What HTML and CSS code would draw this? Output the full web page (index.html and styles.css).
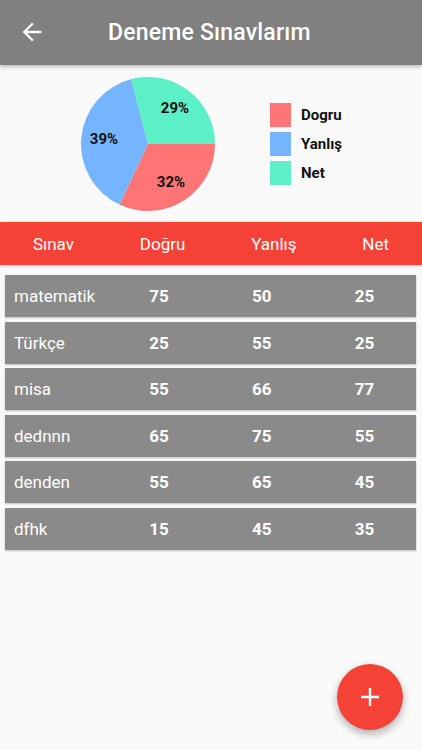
FILE: index.html
```html
<!DOCTYPE html>
<html lang="tr">
<head>
  <meta charset="UTF-8">
  <title>Deneme Sınavlarım</title>
  <link rel="stylesheet" href="styles.css">
</head>
<body>
  <div class="appbar">
    <svg class="back" width="28" height="28" viewBox="0 0 24 24">
      <path d="M20 11H7.83l5.59-5.59L12 4l-8 8 8 8 1.41-1.41L7.83 13H20v-2z" fill="#fff"/>
    </svg>
    <h1>Deneme Sınavlarım</h1>
  </div>

  <div class="chart">
    <svg class="pie" width="134" height="134" viewBox="-67 -67 134 134">
      <!-- Dogru 32%, Yanlis 39%, Net 29% ; 0 derece saat 3 yonunde -->
      <path d="M0 0 L67 0 A67 67 0 0 1 -28.5 60.6 Z" fill="#ff7575"/>
      <path d="M0 0 L-28.5 60.6 A67 67 0 0 1 -16.7 -64.9 Z" fill="#75b4ff"/>
      <path d="M0 0 L-16.7 -64.9 A67 67 0 0 1 67 0 Z" fill="#5cf0c6"/>
      <text x="27" y="-35" class="pct">29%</text>
      <text x="-44" y="-4" class="pct">39%</text>
      <text x="23" y="39" class="pct">32%</text>
    </svg>
    <div class="legend">
      <div class="item"><span class="box red"></span>Dogru</div>
      <div class="item"><span class="box blue"></span>Yanlış</div>
      <div class="item"><span class="box green"></span>Net</div>
    </div>
  </div>

  <div class="tablehead">
    <span>Sınav</span>
    <span>Doğru</span>
    <span>Yanlış</span>
    <span>Net</span>
  </div>

  <div class="list">
    <div class="card"><span class="name">matematik</span><b>75</b><b>50</b><b>25</b></div>
    <div class="card"><span class="name">Türkçe</span><b>25</b><b>55</b><b>25</b></div>
    <div class="card"><span class="name">misa</span><b>55</b><b>66</b><b>77</b></div>
    <div class="card"><span class="name">dednnn</span><b>65</b><b>75</b><b>55</b></div>
    <div class="card"><span class="name">denden</span><b>55</b><b>65</b><b>45</b></div>
    <div class="card"><span class="name">dfhk</span><b>15</b><b>45</b><b>35</b></div>
  </div>

  <div class="fab">
    <svg width="22" height="22" viewBox="0 0 22 22">
      <path d="M11 2v18M2 11h18" stroke="#fff" stroke-width="2.4"/>
    </svg>
  </div>
</body>
</html>
```

FILE: styles.css
```css
* {
  box-sizing: border-box;
}
body {
  margin: 0;
  background: #fafafa;
  font-family: Roboto, "Liberation Sans", sans-serif;
  width: 422px;
  height: 750px;
  position: relative;
  overflow: hidden;
}

.appbar {
  height: 65px;
  background: #808080;
  display: flex;
  align-items: center;
  padding-left: 18px;
  box-shadow: 0 2px 4px rgba(0,0,0,0.25);
}
.appbar .back {
  margin-top: -2px;
}
.appbar h1 {
  margin: 0 0 0 62px;
  color: #fff;
  font-size: 23px;
  font-weight: 500;
  letter-spacing: 0.2px;
}

.chart {
  height: 157px;
  display: flex;
  align-items: center;
  padding-left: 81px;
}
.pie .pct {
  font-size: 15px;
  font-weight: bold;
  fill: #111;
  text-anchor: middle;
  dominant-baseline: middle;
}

.legend {
  margin-left: 55px;
  display: flex;
  flex-direction: column;
  gap: 5px;
  margin-top: 0;
}
.legend .item {
  display: flex;
  align-items: center;
  font-size: 15px;
  font-weight: bold;
  color: #111;
}
.legend .box {
  width: 21px;
  height: 24px;
  margin-right: 10px;
}
.box.red { background: #ff7575; }
.box.blue { background: #75b4ff; }
.box.green { background: #5cf0c6; }

.tablehead {
  height: 43px;
  background: #f44336;
  display: flex;
  justify-content: space-around;
  align-items: center;
  color: #fff;
  font-size: 17px;
  box-shadow: 0 1px 3px rgba(0,0,0,0.2);
}

.list {
  padding: 10px 6px 0 5px;
  display: flex;
  flex-direction: column;
  gap: 4.6px;
}
.card {
  height: 42px;
  background: #8a8a8a;
  display: grid;
  grid-template-columns: repeat(4, 1fr);
  align-items: center;
  color: #fff;
  font-size: 17px;
  box-shadow: 0 1px 2px rgba(0,0,0,0.25);
}
.card .name {
  padding-left: 9px;
}
.card b {
  text-align: center;
  font-weight: bold;
}

.fab {
  position: absolute;
  left: 337px;
  top: 664px;
  width: 66px;
  height: 66px;
  border-radius: 50%;
  background: #f44336;
  display: flex;
  align-items: center;
  justify-content: center;
  box-shadow: 0 4px 8px rgba(0,0,0,0.3);
}
```
